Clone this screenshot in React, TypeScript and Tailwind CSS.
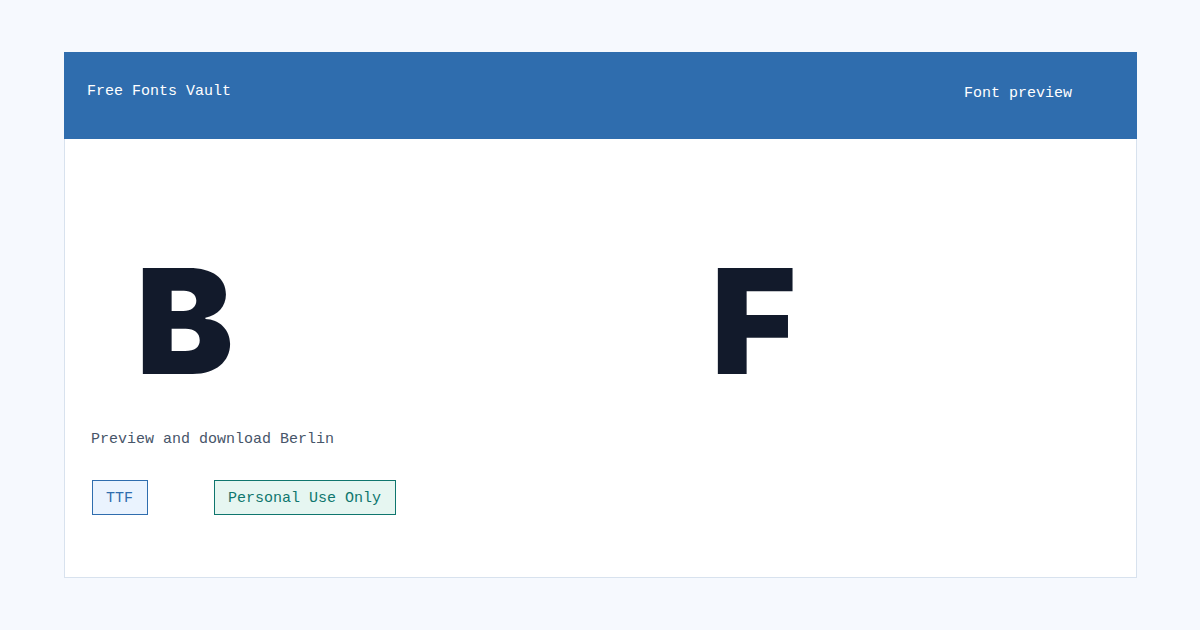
export default function App() {
  return (
    <div className="min-h-screen w-full bg-[#f6f9fe] pt-[52px] font-['Liberation_Mono',monospace]">
      <div className="ml-[64px] w-[1073px]">
        {/* Header bar */}
        <div className="flex h-[87px] items-start justify-between bg-[#2f6dae] pl-[23px] pr-[65px] text-[15px] text-white">
          <span className="mt-[30px] leading-[20px]">Free Fonts Vault</span>
          <span className="mt-[32px] leading-[20px]">Font preview</span>
        </div>

        {/* Glyph samples */}
        <div className="border-x border-b border-[#d8e2ee] bg-white px-[26px] pb-[62px] pt-[102px]">
          <div className="flex font-['Inter',sans-serif] text-[146px] font-black leading-[160px] text-[#121a2b]">
            <span className="ml-[45px] w-[575px]">B</span>
            <span>F</span>
          </div>

          <p className="mt-[27px] text-[15px] leading-[24px] text-[#475569]">
            Preview and download Berlin
          </p>

          <div className="ml-px mt-[28px] flex gap-[66px] text-[15px]">
            <span className="flex h-[35px] items-center border border-[#2f6dae] bg-[#eaf3fe] pl-[13px] pr-[14px] pt-[3px] text-[#2f6dae]">
              TTF
            </span>
            <span className="flex h-[35px] items-center border border-[#0f766e] bg-[#e6f6f1] pl-[13px] pr-[14px] pt-[3px] text-[#0f766e]">
              Personal Use Only
            </span>
          </div>
        </div>
      </div>
    </div>
  );
}
